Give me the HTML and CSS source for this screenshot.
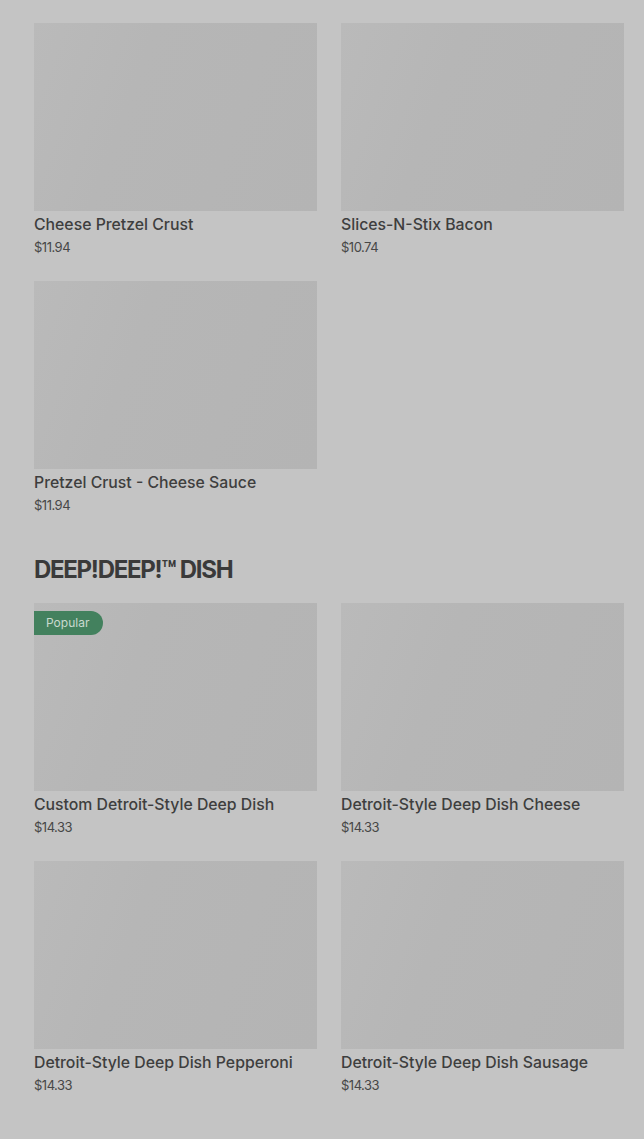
FILE: index.html
```html
<!DOCTYPE html>
<html lang="en">
<head>
<meta charset="utf-8">
<link rel="stylesheet" href="styles.css">
<title>Menu</title>
</head>
<body>
<main class="menu">
  <section class="section">
    <div class="grid">
      <article class="card"><div class="img"></div><h3 class="name">Cheese Pretzel Crust</h3><p class="price">$11.94</p></article>
      <article class="card"><div class="img"></div><h3 class="name">Slices-N-Stix Bacon</h3><p class="price">$10.74</p></article>
      <article class="card"><div class="img"></div><h3 class="name">Pretzel Crust - Cheese Sauce</h3><p class="price">$11.94</p></article>
    </div>
  </section>
  <section class="section">
    <h2 class="heading">DEEP!DEEP!™ DISH</h2>
    <div class="grid">
      <article class="card"><div class="img"><span class="badge">Popular</span></div><h3 class="name">Custom Detroit-Style Deep Dish</h3><p class="price">$14.33</p></article>
      <article class="card"><div class="img"></div><h3 class="name">Detroit-Style Deep Dish Cheese</h3><p class="price">$14.33</p></article>
      <article class="card"><div class="img"></div><h3 class="name">Detroit-Style Deep Dish Pepperoni</h3><p class="price">$14.33</p></article>
      <article class="card"><div class="img"></div><h3 class="name">Detroit-Style Deep Dish Sausage</h3><p class="price">$14.33</p></article>
    </div>
  </section>
  <section class="section">
    <h2 class="heading">CRAZY COMBO!™ SIDES</h2>
  </section>
</main>
</body>
</html>
```
FILE: styles.css
```css
html, body {
  margin: 0;
  padding: 0;
  background: #c4c4c4;
  font-family: Inter, Roboto, "Liberation Sans", sans-serif;
  color: #3c3c3c;
  overflow: hidden;
  height: 1139px;
}
.menu {
  padding: 23px 20px 0 34px;
}
.section + .section {
  margin-top: 39px;
}
.heading {
  margin: 0 0 17px;
  font-size: 24px;
  line-height: 32px;
  font-weight: 700;
  letter-spacing: -1.3px;
  color: #3a3a3a;
}
.grid {
  display: grid;
  grid-template-columns: 283px 283px;
  column-gap: 24px;
  row-gap: 24px;
}
.card {
  margin: 0;
}
.img {
  position: relative;
  height: 188px;
  background: linear-gradient(110deg, #bababa 0%, #b6b6b6 35%, #b4b4b4 100%);
}
.badge {
  position: absolute;
  left: 0;
  top: 8px;
  height: 24px;
  line-height: 24px;
  padding: 0 14px 0 12px;
  background: #43815e;
  color: #c9d9cf;
  font-size: 12px;
  border-radius: 0 12px 12px 0;
}
.name {
  margin: 3px 0 0;
  font-size: 15.8px;
  line-height: 22px;
  font-weight: 500;
  color: #3e3e3e;
  letter-spacing: 0;
}
.price {
  margin: 1px 0 0;
  font-size: 13px;
  line-height: 20px;
  color: #474747;
  letter-spacing: -0.5px;
}
```
